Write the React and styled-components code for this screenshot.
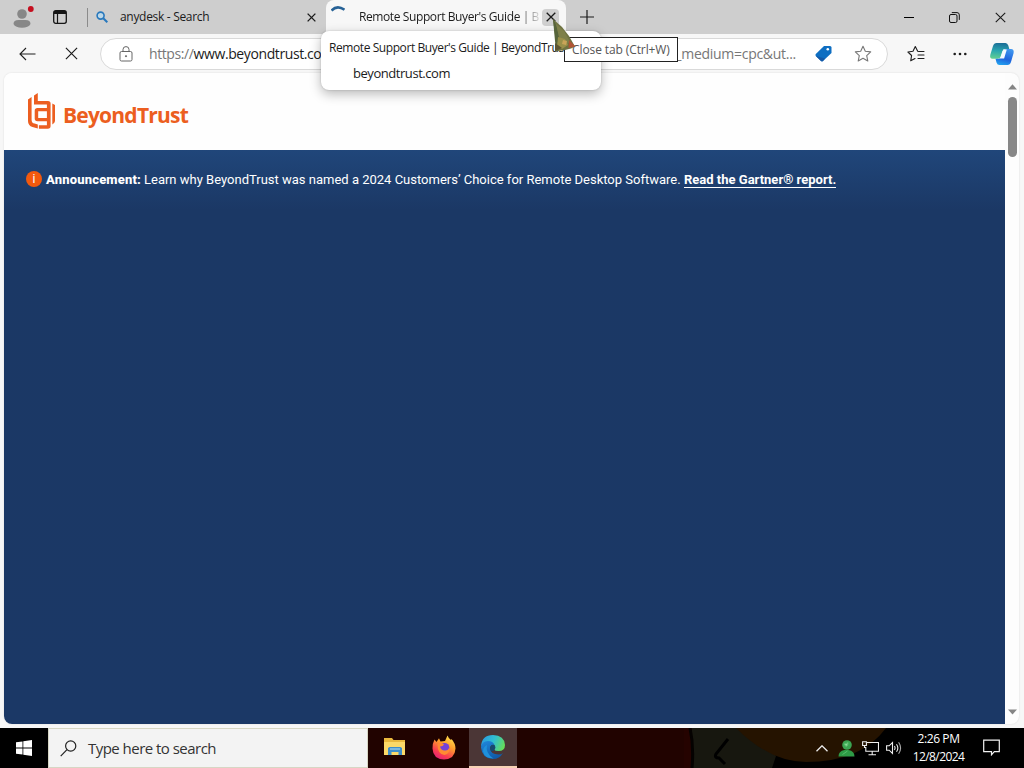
import styled, { createGlobalStyle } from 'styled-components'


function LogoMark() {
  return (
    <svg width="30" height="38" viewBox="0 0 30 38" fill="#EC5E20">
      <path d="M2 6.500 5.600 4v23q0 3 3 3.600l3.200.8v4.200L6.500 34Q2 32.700 2 28z" />
      <path d="M8 2.500 11.800 0v8H22q2.600 0 2.600 2.600V33q0 2.800-2.800 2.800H12.900v-3.500h8V11.600H8z" />
      <path d="M21 15v3.200h-8.800v6.900H21v3.200h-9.500q-2.800 0-2.800-2.800v-7.700Q8.700 15 11.500 15z" />
      <path d="M26.300 10.500 29 12v16q0 1.800-2.700 3.500z" />
    </svg>
  )
}

function StarIcon({ lines, color }) {
  return (
    <svg width="18" height="18" viewBox="0 0 18 18" fill="none" stroke={color} strokeWidth="1.1" strokeLinejoin="round" strokeLinecap="round">
      {lines ? (
        <path d="M12 6.500 10.700 6.200 8.300 1.500 6 6.200.900 7l3.700 3.500-.9 5.300L8 13.500M12 6.500h5M11 10h6M11 13.500h6" />
      ) : (
        <path d="m9 1.300 2.300 5 5.400.6-4 3.700 1.100 5.400L9 13.300 4.200 16l1.100-5.400-4-3.700 5.400-.6z" />
      )}
    </svg>
  )
}

function CloseIcon({ size, width }) {
  return (
    <svg width={size} height={size} viewBox="0 0 10 10" stroke="#1b1b1b" strokeWidth={width}>
      <path d="m.7.7 8.600 8.600M9.300.7.7 9.300" />
    </svg>
  )
}

function CopilotIcon() {
  return (
    <svg width="26" height="24" viewBox="0 0 26 24">
      <defs>
        <linearGradient id="cpA" x1=".4" y1="0" x2=".3" y2="1">
          <stop offset="0" stopColor="#1b6f98" />
          <stop offset=".5" stopColor="#2aa7b0" />
          <stop offset="1" stopColor="#62cf91" />
        </linearGradient>
        <linearGradient id="cpB" x1=".6" y1="0" x2=".3" y2="1">
          <stop offset="0" stopColor="#3f95ee" />
          <stop offset=".6" stopColor="#2064dd" />
          <stop offset="1" stopColor="#22a2ef" />
        </linearGradient>
      </defs>
      <path d="M7.500 1h9q2 0 2.800 2.500L20.300 7h-4q-2.300 0-3 2.300l-1.600 5.200q-.7 2.200-3 2.200H3.600Q.4 16.700 1.300 12.800L4 4q1-3 3.500-3Z" fill="url(#cpA)" />
      <path d="M18.500 23h-8q-2.200 0-3-2.500l-1-3.800h3.200q2.200 0 3-2.200l1.700-5.200q.7-2.300 3-2.300h4.500q3.400 0 2.700 4L22 20q-.9 3-3.500 3Z" fill="url(#cpB)" />
      <path d="M14.500 7.500h3.300l-2.700 9h-4z" fill="#f4fbff" />
    </svg>
  )
}

function FolderIcon() {
  return (
    <svg width="22" height="20" viewBox="0 0 22 20">
      <path d="M0 1h8l1.500 2H21v15H0z" fill="#E9B83D" />
      <path d="M0 5h21v13H0z" fill="#FBD968" />
      <path d="M4 18v-7l1.500-1h11l1.500 1v7h-3.500v-3h-7v3z" fill="#3E8FCB" />
      <path d="M6 11h10v2H6z" fill="#7BB8DE" />
    </svg>
  )
}

function FirefoxIcon() {
  return (
    <svg width="24" height="25" viewBox="0 0 24 25">
      <defs>
        <linearGradient id="fx" x1=".8" y1="0" x2=".25" y2="1">
          <stop offset="0" stopColor="#FFE64C" />
          <stop offset=".4" stopColor="#FF9B2D" />
          <stop offset=".75" stopColor="#FA3D50" />
          <stop offset="1" stopColor="#E21F78" />
        </linearGradient>
      </defs>
      <path d="M2.500 4.500 4.500 7 7 3.200 8.500 6.500 13 6 15.500.5q1 3 3.500 4.500l.5-1q4 4.500 4 9.500Q23 24 12 24.500 1 24 .5 13.500.5 8 2.500 4.500Z" fill="url(#fx)" />
      <circle cx="12.500" cy="12.800" r="4.900" fill="#7542D8" />
      <path d="M5.500 9q3-2 6.500.5-1 2-4 2 1 4.500 5.500 4 3-.5 4-3 1 6-5 7.500-7-.5-7-11Z" fill="#FF8B32" />
    </svg>
  )
}

function EdgeIcon() {
  return (
    <svg width="26" height="26" viewBox="0 0 26 26">
      <defs>
        <linearGradient id="edTop" x1="0" y1=".3" x2="1" y2=".6">
          <stop offset="0" stopColor="#2A9BE0" />
          <stop offset=".5" stopColor="#31BFD0" />
          <stop offset="1" stopColor="#66DD58" />
        </linearGradient>
        <linearGradient id="edLow" x1="0" y1="0" x2=".5" y2="1">
          <stop offset="0" stopColor="#2088DD" />
          <stop offset="1" stopColor="#105BA8" />
        </linearGradient>
      </defs>
      <path d="M1 12Q2 1 13 1q11.500.500 12 10 0 6-6.500 6-3.500 0-4.500-1.500 2-2 .500-4Q10 6 1 12Z" fill="url(#edTop)" />
      <path d="M1 13.500Q1.500 7 8 7q5 .2 6.500 4-3.500-1-4.500 3 .5 6.500 8.500 6.500 3 0 4.500-1.500-3.500 6-10 6-11-.5-12-11.500Z" fill="url(#edLow)" />
      <path d="M7 11q-2 8 6.500 13.500-9 0-10.500-7Q3 12.500 7 11Z" fill="#1F91DC" />
      <path d="M14.500 11q-3.500-1-4.500 3 .2 2 1.500 3.500 3-.5 3.500-2.500 1-2-.5-4Z" fill="#174A6E" />
    </svg>
  )
}

function App() {
  return (
    <Screen>
      <GlobalStyle />

      <TabStrip>
        <ProfileArea>
          <svg width="24" height="24" viewBox="0 0 24 24">
            <circle cx="11" cy="10" r="4.800" fill="#878787" />
            <path d="M2.500 20q0-4 5-4h7q5 0 5 4-2 3.800-8.500 3.800T2.500 20Z" fill="#878787" />
            <circle cx="19.800" cy="5" r="2.900" fill="#C50F1F" />
          </svg>
        </ProfileArea>
        <WorkspaceArea>
          <svg width="14" height="14" viewBox="0 0 14 14" fill="none" stroke="#151515">
            <rect x=".700" y=".700" width="12.600" height="12.600" rx="2" strokeWidth="1.300" />
            <path d="M1 2.500h12" strokeWidth="3" />
            <path d="M4.500 3v10" strokeWidth="1.200" />
          </svg>
        </WorkspaceArea>
        <Divider />
        <Tab>
          <svg width="12" height="12" viewBox="0 0 12 12" fill="none" stroke="#2878BD">
            <circle cx="4.600" cy="4.600" r="3.500" strokeWidth="1.600" fill="#BDD8E8" />
            <path d="m7.300 7.300 4 4" strokeWidth="2" />
          </svg>
          <TabTitle>anydesk - Search</TabTitle>
          <CloseIcon size={9} width={1.500} />
        </Tab>
        <ActiveTab>
          <Spinner width="14" height="14" viewBox="0 0 14 14" fill="none" stroke="#276296" strokeWidth="2.600">
            <path d="M.5 5.500Q6-.5 13.500 4.700" />
          </Spinner>
          <ActiveTitle>Remote Support Buyer's Guide | B</ActiveTitle>
          <CloseButton><CloseIcon size={10} width={1.300} /></CloseButton>
        </ActiveTab>
        <NewTab>
          <svg width="14" height="14" viewBox="0 0 14 14" stroke="#1b1b1b" strokeWidth="1.200"><path d="M7 0v14M0 7h14" /></svg>
        </NewTab>
        <WindowButtons>
          <svg width="10" height="10" viewBox="0 0 10 10" stroke="#000"><path d="M0 5.500h10" /></svg>
          <svg width="11" height="11" viewBox="0 0 11 11" fill="none" stroke="#111">
            <rect x=".5" y="2.500" width="7.500" height="8" rx="1.500" />
            <path d="M2.800.6H8q2.300 0 2.300 2.300v5" />
          </svg>
          <CloseIcon size={11} width={1} />
        </WindowButtons>
      </TabStrip>

      <Toolbar>
        <NavButtons>
          <svg width="17" height="14" viewBox="0 0 17 14" fill="none" stroke="#1f1f1f" strokeWidth="1.100"><path d="M16.500 7H1M7 1 1 7l6 6" /></svg>
          <CloseIcon size={13} width={0.900} />
        </NavButtons>
        <AddressBar>
          <svg width="14" height="16" viewBox="0 0 14 16" fill="none" stroke="#666">
            <rect x="1" y="5.500" width="12" height="9.500" rx="1.500" />
            <path d="M4 5.500V3.500Q4 .6 7 .6t3 2.900v2" />
            <circle cx="7" cy="10.200" r=".6" fill="#555" />
          </svg>
          <Url><span>https://</span>www.beyondtrust.co</Url>
          <UrlEnd>_medium=cpc&amp;ut...</UrlEnd>
          <svg width="17" height="17" viewBox="0 0 17 17">
            <path d="M9 1h6q1.500 0 1.500 1.500V8L8 16q-1 .8-2 0L.8 11q-.8-1 0-2z" fill="#0E6EC2" />
            <path d="M.8 11 10 13.500 8 16q-1 .8-2 0z" fill="#1558A6" />
            <circle cx="12.800" cy="4.300" r="1.300" fill="#fff" />
          </svg>
          <StarIcon color="#777" />
        </AddressBar>
        <ToolIcons>
          <StarIcon lines color="#1d1d1d" />
          <svg width="14" height="4" viewBox="0 0 14 4" fill="#1d1d1d"><circle cx="1.700" cy="2" r="1.300" /><circle cx="7" cy="2" r="1.300" /><circle cx="12.300" cy="2" r="1.300" /></svg>
          <CopilotIcon />
        </ToolIcons>
      </Toolbar>

      <ViewFrame>
        <Page>
          <SiteHeader>
            <LogoMark />
            <LogoText>BeyondTrust</LogoText>
          </SiteHeader>
          <Hero>
            <InfoDot>i</InfoDot>
            <Strong>Announcement:</Strong>
            <Notice>Learn why BeyondTrust was named a 2024 Customers’ Choice for Remote Desktop Software.</Notice>
            <ReportLink>Read the Gartner® report.</ReportLink>
          </Hero>
        </Page>
        <Scrollbar>
          <svg width="9" height="6" viewBox="0 0 9 6" fill="#858585"><path d="M4.500.2 9 5.500H0z" /></svg>
          <Thumb />
          <svg width="9" height="6" viewBox="0 0 9 6" fill="#858585"><path d="M4.500 5.500 9 .5H0z" /></svg>
        </Scrollbar>
      </ViewFrame>

      <Taskbar>
        <Wallpaper width="340" height="40" viewBox="0 0 340 40">
          <rect width="340" height="40" fill="#000" />
          <path d="M0 0h8v40H0z" fill="#250300" />
          <path d="M8 0h60l24 28-4 12H8z" fill="#17170f" />
          <path d="M52 0h150q-25 34-80 34-36 0-70-34Z" fill="#251300" />
          <path d="m44 11-12 15q-2 4 3 4l6 6" stroke="#000" strokeWidth="3" fill="none" />
          <path d="M6 0q4 18 2 40" stroke="#050201" strokeWidth="3" fill="none" />
        </Wallpaper>
        <StartButton>
          <svg width="16" height="16" viewBox="0 0 16 16" fill="#fff"><path d="M0 2.300 6.500 1.400v6.200H0zM7.300 1.200 16 0v7.600H7.300zM0 8.400h6.500v6.200L0 13.700zM7.300 8.400H16V16l-8.700-1.200z" /></svg>
        </StartButton>
        <SearchBox>
          <svg width="17" height="17" viewBox="0 0 17 17" fill="none" stroke="#222" strokeWidth="1.200"><circle cx="10.700" cy="6" r="5.100" /><path d="M7 9.700.700 16.200" /></svg>
          <span>Type here to search</span>
        </SearchBox>
        <AppButton $left={3}><FolderIcon /></AppButton>
        <AppButton $left={1}><FirefoxIcon /></AppButton>
        <AppButton $left={1} $active><EdgeIcon /></AppButton>
        <Tray>
          <svg width="12" height="7" viewBox="0 0 12 7" fill="none" stroke="#eee" strokeWidth="1.300"><path d="m.5 6.300 5.500-5.500 5.500 5.500" /></svg>
          <svg width="17" height="17" viewBox="0 0 17 17">
            <circle cx="9" cy="5" r="4.800" fill="#3BA552" />
            <path d="M.5 16.500q0-5.500 6-6.500h4q6 1 6 6.500z" fill="#2E9B46" />
            <path d="M6 4q2 0 4-1.500.5 3-2 4zM4.500 14.500l5-3.500" fill="#8ED79B" stroke="#57BE6B" />
          </svg>
          <svg width="17" height="15" viewBox="0 0 17 15" fill="none" stroke="#eee" strokeWidth="1.100">
            <path d="M5 1.500h11.500v8.700H3.800V6M10.200 10.500v3M6.500 13.800h7.500" />
            <path d="M.6.700h3.800v3.800H.6zM2.500 4.500v2h1.500" />
          </svg>
          <svg width="16" height="14" viewBox="0 0 16 14" fill="none" stroke="#eee" strokeWidth="1.100">
            <path d="M.6 4.800h2.600L6.500 1.500v11L3.200 9.200H.6zM8.500 5q1.300 2 0 4M10.500 3.200q2.700 3.800 0 7.600" />
            <path d="M12.600 1.300q4 5.700 0 11.400" stroke="#aaa" />
          </svg>
        </Tray>
        <Clock>
          <div>2:26 PM</div>
          <ClockDate>12/8/2024</ClockDate>
        </Clock>
        <Notifications>
          <svg width="17" height="17" viewBox="0 0 17 17" fill="none" stroke="#f2f2f2" strokeWidth="1.200"><path d="M.7 1.200h15.600v11.500h-5L8.500 15.800v-3.100H.7z" /></svg>
        </Notifications>
      </Taskbar>

      <HoverCard>
        <CardTitle>Remote Support Buyer's Guide | BeyondTrust</CardTitle>
        <CardHost>beyondtrust.com</CardHost>
      </HoverCard>
      <Tooltip>Close tab (Ctrl+W)</Tooltip>
      <Cursor width="26" height="34" viewBox="0 0 26 34">
        <path d="m2 0 9 8 7 9 6 10.500-4 2-6 1.500-10 1.500 1-9z" fill="#6F7342" />
        <path d="m2 0 4 8 2 10-3 12-1-8z" fill="#56643A" />
        <path d="m5 5 8 7 6 11-6 4-5-9z" fill="#7E8049" />
        <path d="m7 18 7 2 3 6-6 4-5-2z" fill="#9A9049" />
        <path d="m12 21 4 1-1 4-4-1z" fill="#C9A458" />
        <path d="m18 21 6.500 6.500-7 1.500z" fill="#B05434" />
        <path d="m4 24 7 5-7 3z" fill="#5D5532" />
      </Cursor>
    </Screen>
  )
}

export default App;


const GlobalStyle = createGlobalStyle`
  * { box-sizing: border-box; }
  body {
    margin: 0;
    overflow: hidden;
    font-family: "Open Sans", "Noto Sans", sans-serif;
  }
  svg { display: block; flex: none; }
`;

const Screen = styled.div`
  position: relative;
  display: flex;
  flex-direction: column;
  width: 1024px;
  height: 768px;
  background: #f7f7f7;
  overflow: hidden;
  white-space: nowrap;
`;

const TabStrip = styled.div`
  display: flex;
  height: 34px;
  background: #cecece;
  color: #1b1b1b;
  font-size: 12px;
`;

const ProfileArea = styled.div`
  width: 53px;
  padding: 4px 0 0 11px;
`;

const WorkspaceArea = styled.div`
  width: 34px;
  padding: 10px 0 0;
`;

const Divider = styled.div`
  width: 1px;
  height: 19px;
  margin-top: 8px;
  background: #8b8b8b;
`;

const Tab = styled.div`
  display: flex;
  align-items: center;
  width: 238px;
  padding: 0 10px 0 8px;
`;

const TabTitle = styled.div`
  flex: 1;
  margin-left: 12px;
  padding-bottom: 1px;
  letter-spacing: -0.31px;
`;

const ActiveTab = styled.div`
  display: flex;
  align-items: center;
  width: 240px;
  padding: 0 7px 0 5px;
  border-radius: 8px 8px 0 0;
  background: #f7f7f7;
`;

const Spinner = styled.svg`
  align-self: flex-start;
  margin-top: 5px;
`;

const ActiveTitle = styled.div`
  margin: 0 auto 0 14px;
  padding-bottom: 1px;
  letter-spacing: -0.4px;
  mask-image: linear-gradient(90deg, #000 158px, transparent 184px);
`;

const CloseButton = styled.div`
  display: flex;
  align-items: center;
  justify-content: center;
  flex: none;
  width: 17px;
  height: 17px;
  border-radius: 4px;
  background: #d0d0d0;
`;

const NewTab = styled.div`
  padding: 10px 0 0 14px;
`;

const WindowButtons = styled.div`
  display: flex;
  align-items: center;
  gap: 35px;
  margin: 0 18px 0 auto;
`;

const Toolbar = styled.div`
  display: flex;
  align-items: center;
  height: 39px;
  color: #1b1b1b;
`;

const NavButtons = styled.div`
  display: flex;
  align-items: center;
  gap: 29px;
  width: 100px;
  padding-left: 19px;
`;

const AddressBar = styled.div`
  display: flex;
  align-items: center;
  width: 788px;
  height: 32px;
  padding: 0 15px 0 18px;
  border: 1px solid #d9d9d9;
  border-radius: 16px;
  background: #fff;
`;

const Url = styled.div`
  margin-left: 16px;
  font-size: 14px;
  letter-spacing: -0.4px;

  > span {
    color: #777;
  }
`;

const UrlEnd = styled.div`
  margin: 0 19px 0 auto;
  font-size: 14px;
  letter-spacing: -0.28px;
  color: #777;

  & + svg {
    margin-right: 22px;
  }
`;

const ToolIcons = styled.div`
  display: flex;
  align-items: center;
  gap: 28px;
  padding-left: 19px;

  > svg:last-child {
    margin-left: -6px;
  }
`;

const ViewFrame = styled.div`
  display: flex;
  height: 651px;
  margin: 0 5px 0 4px;
  border-radius: 8px;
  overflow: hidden;
  background: #fdfdfd;
  box-shadow: 0 0 2px rgba(0, 0, 0, 0.12);
`;

const Page = styled.div`
  width: 1001px;
`;

const SiteHeader = styled.div`
  display: flex;
  height: 77px;
  padding: 20px 0 0 22px;
  background: #fefefe;
`;

const LogoText = styled.div`
  margin: 7px 0 0 7px;
  font-size: 21px;
  line-height: 30px;
  font-weight: 700;
  letter-spacing: -0.78px;
  color: #ec5e20;
`;

const Hero = styled.div`
  display: flex;
  align-items: flex-start;
  height: 574px;
  padding: 20px 0 0 22px;
  background: linear-gradient(#20467a, #1b3865 60px, #1b3866);
  color: #fff;
  font-family: Roboto, sans-serif;
  font-size: 13px;
  line-height: 19px;
`;

const InfoDot = styled.div`
  width: 16px;
  height: 16px;
  margin: 1px 4px 0 0;
  border-radius: 50%;
  background: #f2590d;
  font-size: 12px;
  line-height: 16px;
  text-align: center;
`;

const Strong = styled.div`
  width: 98px;
  font-weight: 800;
  letter-spacing: 0.18px;
`;

const Notice = styled.div`
  width: 540px;
`;

const ReportLink = styled.div`
  height: 18px;
  font-weight: 700;
  border-bottom: 1px solid #fff;
`;

const Scrollbar = styled.div`
  display: flex;
  flex-direction: column;
  align-items: center;
  justify-content: space-between;
  width: 14px;
  padding: 11px 0 9px;
`;

const Thumb = styled.div`
  width: 9px;
  height: 60px;
  margin: 7px 0 auto;
  border-radius: 5px;
  background: #878787;
`;

const Taskbar = styled.div`
  position: relative;
  display: flex;
  height: 40px;
  margin-top: auto;
  background: #210300;
  color: #fff;
`;

const Wallpaper = styled.svg`
  position: absolute;
  right: 0;
  top: 0;
`;

const StartButton = styled.div`
  display: flex;
  align-items: center;
  justify-content: center;
  width: 48px;
  background: #000;
`;

const SearchBox = styled.div`
  display: flex;
  align-items: center;
  width: 320px;
  padding-left: 11px;
  background: #f3f3f3;
  border: 1px solid #d6d6c4;
  color: #333;
  font-size: 15px;

  > span {
    margin-left: 11px;
    letter-spacing: -0.53px;
  }
`;

const AppButton = styled.div`
  display: flex;
  align-items: center;
  justify-content: center;
  width: 48px;
  margin-left: ${props => props.$left || 0}px;
  background: ${props => props.$active ? '#4b3636' : 'transparent'};
  border-bottom: 2px solid ${props => props.$active ? '#f7d2b5' : 'transparent'};
`;

const Tray = styled.div`
  position: relative;
  display: flex;
  align-items: center;
  gap: 7px;
  margin-left: auto;

  > svg:first-child {
    margin-right: 3px;
  }
`;

const Clock = styled.div`
  position: relative;
  width: 73px;
  font-size: 12px;
  line-height: 18px;
  padding-top: 2px;
  text-align: center;
  letter-spacing: -0.4px;
`;

const ClockDate = styled.div`
  letter-spacing: -0.6px;
`;

const Notifications = styled.div`
  position: relative;
  width: 49px;
  padding: 11px 0 0 8px;
`;

const HoverCard = styled.div`
  position: absolute;
  left: 321px;
  top: 31px;
  width: 280px;
  height: 59px;
  padding: 8px;
  border-radius: 8px;
  background: #fff;
  box-shadow: 0 4px 12px rgba(0, 0, 0, 0.28), 0 0 2px rgba(0, 0, 0, 0.2);
  color: #1b1b1b;
  font-size: 12px;
  line-height: 18px;
`;

const CardTitle = styled.div`
  letter-spacing: -0.42px;
`;

const CardHost = styled.div`
  margin: 7px 0 0 24px;
  font-size: 13px;
  letter-spacing: -0.45px;
`;

const Tooltip = styled.div`
  position: absolute;
  left: 564px;
  top: 37px;
  width: 114px;
  height: 25px;
  padding-left: 7px;
  border: 1px solid #222;
  background: #fff;
  color: #555;
  font-size: 12px;
  line-height: 23px;
  letter-spacing: -0.1px;
`;

const Cursor = styled.svg`
  position: absolute;
  left: 551px;
  top: 19px;
`;
